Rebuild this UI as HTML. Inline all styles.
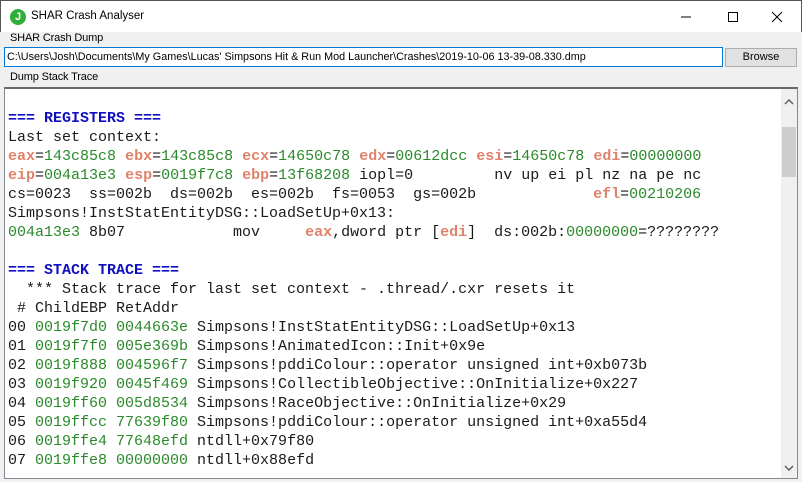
<!DOCTYPE html>
<html><head><style>
*{margin:0;padding:0;box-sizing:border-box}
body{width:802px;height:482px;background:#f0f0f0;font-family:"Liberation Sans",sans-serif;font-size:11px;position:relative;overflow:hidden;color:#000}
.title{position:absolute;left:0;top:0;width:802px;height:32px;background:#fff;border:1px solid #555;border-bottom:none}
.icon{position:absolute;left:9px;top:8px;width:16px;height:16px;border-radius:50%;background:#2fae3a;color:#fff;font-weight:bold;font-size:11px;text-align:center;line-height:16px}
.ttext{position:absolute;left:30px;top:9px;font-size:11.5px}
.lbl{position:absolute;left:10px;font-size:11px;letter-spacing:-0.15px}
.tb{position:absolute;left:4px;top:47px;width:719px;height:20px;background:#fff;border:1px solid #0078d7;font-size:10.8px;padding:3px 0 0 2px;white-space:nowrap;overflow:hidden}
.btn{position:absolute;left:725px;top:48px;width:72px;height:19px;background:#e1e1e1;border:1px solid #adadad;text-align:center;line-height:17px}
.area{position:absolute;left:4px;top:87px;width:794px;height:392px;background:#fff;border:1px solid #828790;border-top:2px solid #696969}
.sb{position:absolute;left:776px;top:0;width:16px;height:389px;background:#f0f0f0}
.thumb{position:absolute;left:1px;top:38px;width:14px;height:50px;background:#cdcdcd}
pre{position:absolute;left:3px;top:20px;font-family:"Liberation Mono",monospace;font-size:15px;line-height:19px;color:#1a1a1a}
.h{color:#1010c0;font-weight:bold}
.r{color:#e0826a;font-weight:bold}
.g{color:#2a8a2a}
</style></head><body>
<div class="title"><div class="icon">J</div><div class="ttext">SHAR Crash Analyser</div>
<svg style="position:absolute;left:680px;top:10px" width="110" height="12"><line x1="0" y1="6" x2="10" y2="6" stroke="#000"/><rect x="47.5" y="1.5" width="9" height="9" fill="none" stroke="#000"/><path d="M91 1L101 11M101 1L91 11" stroke="#000"/></svg></div>
<div class="lbl" style="top:32px">SHAR Crash Dump</div>
<div class="tb">C:\Users\Josh\Documents\My Games\Lucas' Simpsons Hit &amp; Run Mod Launcher\Crashes\2019-10-06 13-39-08.330.dmp</div>
<div class="btn">Browse</div>
<div class="lbl" style="top:71px">Dump Stack Trace</div>
<div class="area">
<pre><span class="h">=== REGISTERS ===</span>
Last set context:
<span class="r">eax</span>=<span class="g">143c85c8</span> <span class="r">ebx</span>=<span class="g">143c85c8</span> <span class="r">ecx</span>=<span class="g">14650c78</span> <span class="r">edx</span>=<span class="g">00612dcc</span> <span class="r">esi</span>=<span class="g">14650c78</span> <span class="r">edi</span>=<span class="g">00000000</span>
<span class="r">eip</span>=<span class="g">004a13e3</span> <span class="r">esp</span>=<span class="g">0019f7c8</span> <span class="r">ebp</span>=<span class="g">13f68208</span> iopl=0         nv up ei pl nz na pe nc
cs=0023  ss=002b  ds=002b  es=002b  fs=0053  gs=002b             <span class="r">efl</span>=<span class="g">00210206</span>
Simpsons!InstStatEntityDSG::LoadSetUp+0x13:
<span class="g">004a13e3</span> 8b07            mov     <span class="r">eax</span>,dword ptr [<span class="r">edi</span>]  ds:002b:<span class="g">00000000</span>=????????

<span class="h">=== STACK TRACE ===</span>
  *** Stack trace for last set context - .thread/.cxr resets it
 # ChildEBP RetAddr  
00 <span class="g">0019f7d0 0044663e</span> Simpsons!InstStatEntityDSG::LoadSetUp+0x13
01 <span class="g">0019f7f0 005e369b</span> Simpsons!AnimatedIcon::Init+0x9e
02 <span class="g">0019f888 004596f7</span> Simpsons!pddiColour::operator unsigned int+0xb073b
03 <span class="g">0019f920 0045f469</span> Simpsons!CollectibleObjective::OnInitialize+0x227
04 <span class="g">0019ff60 005d8534</span> Simpsons!RaceObjective::OnInitialize+0x29
05 <span class="g">0019ffcc 77639f80</span> Simpsons!pddiColour::operator unsigned int+0xa55d4
06 <span class="g">0019ffe4 77648efd</span> ntdll+0x79f80
07 <span class="g">0019ffe8 00000000</span> ntdll+0x88efd</pre>
<div class="sb"><div class="thumb"></div>
<svg style="position:absolute;left:3px;top:10px" width="10" height="6"><path d="M1 5L5 1L9 5" stroke="#606060" stroke-width="1.5" fill="none"/></svg>
<svg style="position:absolute;left:3px;top:376px" width="10" height="6"><path d="M1 1L5 5L9 1" stroke="#606060" stroke-width="1.5" fill="none"/></svg></div>
</div>
</body></html>
